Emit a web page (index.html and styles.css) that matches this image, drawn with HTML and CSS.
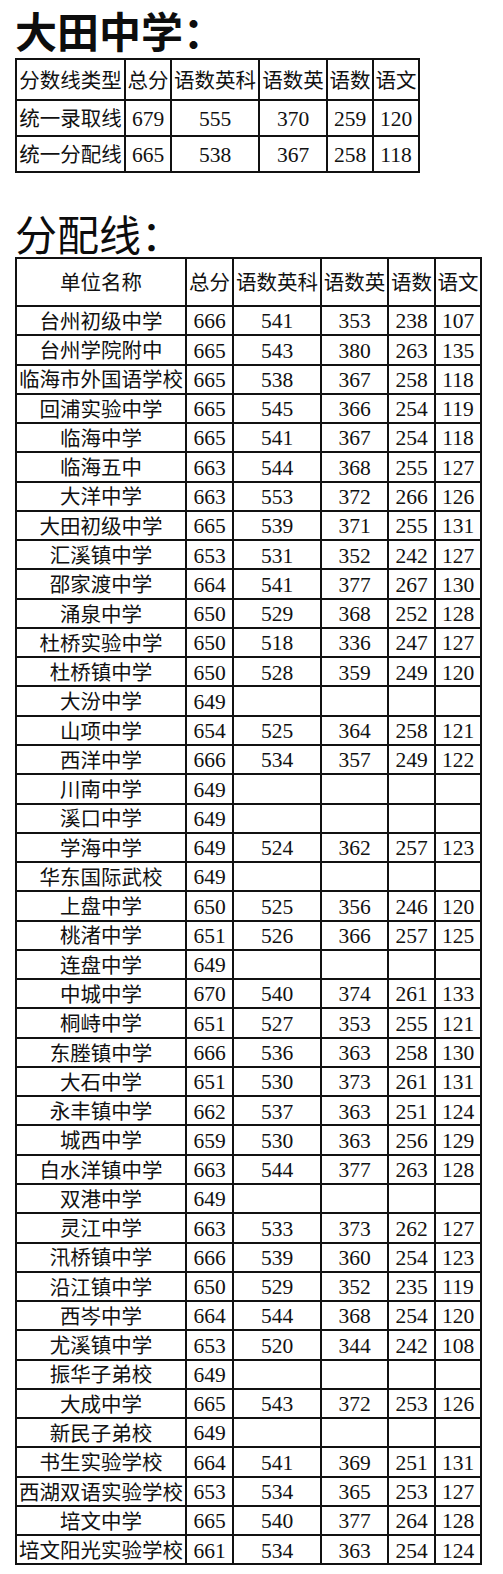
FILE: index.html
```html
<!DOCTYPE html>
<html lang="zh-CN">
<head>
<meta charset="utf-8">
<title>大田中学 分配线</title>
<link rel="stylesheet" href="styles.css">
</head>
<body>
<div class="page">
  <h1 class="title title-bold">大田中学：</h1>
  <div class="grid grid-top">
    <div class="c">分数线类型</div><div class="c">总分</div><div class="c">语数英科</div><div class="c">语数英</div><div class="c">语数</div><div class="c">语文</div>
    <div class="c">统一录取线</div><div class="c">679</div><div class="c">555</div><div class="c">370</div><div class="c">259</div><div class="c">120</div>
    <div class="c">统一分配线</div><div class="c">665</div><div class="c">538</div><div class="c">367</div><div class="c">258</div><div class="c">118</div>
  </div>
  <h2 class="title title-light">分配线：</h2>
  <div class="grid grid-main">
    <div class="c">单位名称</div><div class="c">总分</div><div class="c">语数英科</div><div class="c">语数英</div><div class="c">语数</div><div class="c">语文</div>
    <div class="c">台州初级中学</div><div class="c">666</div><div class="c">541</div><div class="c">353</div><div class="c">238</div><div class="c">107</div>
    <div class="c">台州学院附中</div><div class="c">665</div><div class="c">543</div><div class="c">380</div><div class="c">263</div><div class="c">135</div>
    <div class="c">临海市外国语学校</div><div class="c">665</div><div class="c">538</div><div class="c">367</div><div class="c">258</div><div class="c">118</div>
    <div class="c">回浦实验中学</div><div class="c">665</div><div class="c">545</div><div class="c">366</div><div class="c">254</div><div class="c">119</div>
    <div class="c">临海中学</div><div class="c">665</div><div class="c">541</div><div class="c">367</div><div class="c">254</div><div class="c">118</div>
    <div class="c">临海五中</div><div class="c">663</div><div class="c">544</div><div class="c">368</div><div class="c">255</div><div class="c">127</div>
    <div class="c">大洋中学</div><div class="c">663</div><div class="c">553</div><div class="c">372</div><div class="c">266</div><div class="c">126</div>
    <div class="c">大田初级中学</div><div class="c">665</div><div class="c">539</div><div class="c">371</div><div class="c">255</div><div class="c">131</div>
    <div class="c">汇溪镇中学</div><div class="c">653</div><div class="c">531</div><div class="c">352</div><div class="c">242</div><div class="c">127</div>
    <div class="c">邵家渡中学</div><div class="c">664</div><div class="c">541</div><div class="c">377</div><div class="c">267</div><div class="c">130</div>
    <div class="c">涌泉中学</div><div class="c">650</div><div class="c">529</div><div class="c">368</div><div class="c">252</div><div class="c">128</div>
    <div class="c">杜桥实验中学</div><div class="c">650</div><div class="c">518</div><div class="c">336</div><div class="c">247</div><div class="c">127</div>
    <div class="c">杜桥镇中学</div><div class="c">650</div><div class="c">528</div><div class="c">359</div><div class="c">249</div><div class="c">120</div>
    <div class="c">大汾中学</div><div class="c">649</div><div class="c"></div><div class="c"></div><div class="c"></div><div class="c"></div>
    <div class="c">山项中学</div><div class="c">654</div><div class="c">525</div><div class="c">364</div><div class="c">258</div><div class="c">121</div>
    <div class="c">西洋中学</div><div class="c">666</div><div class="c">534</div><div class="c">357</div><div class="c">249</div><div class="c">122</div>
    <div class="c">川南中学</div><div class="c">649</div><div class="c"></div><div class="c"></div><div class="c"></div><div class="c"></div>
    <div class="c">溪口中学</div><div class="c">649</div><div class="c"></div><div class="c"></div><div class="c"></div><div class="c"></div>
    <div class="c">学海中学</div><div class="c">649</div><div class="c">524</div><div class="c">362</div><div class="c">257</div><div class="c">123</div>
    <div class="c">华东国际武校</div><div class="c">649</div><div class="c"></div><div class="c"></div><div class="c"></div><div class="c"></div>
    <div class="c">上盘中学</div><div class="c">650</div><div class="c">525</div><div class="c">356</div><div class="c">246</div><div class="c">120</div>
    <div class="c">桃渚中学</div><div class="c">651</div><div class="c">526</div><div class="c">366</div><div class="c">257</div><div class="c">125</div>
    <div class="c">连盘中学</div><div class="c">649</div><div class="c"></div><div class="c"></div><div class="c"></div><div class="c"></div>
    <div class="c">中城中学</div><div class="c">670</div><div class="c">540</div><div class="c">374</div><div class="c">261</div><div class="c">133</div>
    <div class="c">桐峙中学</div><div class="c">651</div><div class="c">527</div><div class="c">353</div><div class="c">255</div><div class="c">121</div>
    <div class="c">东塍镇中学</div><div class="c">666</div><div class="c">536</div><div class="c">363</div><div class="c">258</div><div class="c">130</div>
    <div class="c">大石中学</div><div class="c">651</div><div class="c">530</div><div class="c">373</div><div class="c">261</div><div class="c">131</div>
    <div class="c">永丰镇中学</div><div class="c">662</div><div class="c">537</div><div class="c">363</div><div class="c">251</div><div class="c">124</div>
    <div class="c">城西中学</div><div class="c">659</div><div class="c">530</div><div class="c">363</div><div class="c">256</div><div class="c">129</div>
    <div class="c">白水洋镇中学</div><div class="c">663</div><div class="c">544</div><div class="c">377</div><div class="c">263</div><div class="c">128</div>
    <div class="c">双港中学</div><div class="c">649</div><div class="c"></div><div class="c"></div><div class="c"></div><div class="c"></div>
    <div class="c">灵江中学</div><div class="c">663</div><div class="c">533</div><div class="c">373</div><div class="c">262</div><div class="c">127</div>
    <div class="c">汛桥镇中学</div><div class="c">666</div><div class="c">539</div><div class="c">360</div><div class="c">254</div><div class="c">123</div>
    <div class="c">沿江镇中学</div><div class="c">650</div><div class="c">529</div><div class="c">352</div><div class="c">235</div><div class="c">119</div>
    <div class="c">西岑中学</div><div class="c">664</div><div class="c">544</div><div class="c">368</div><div class="c">254</div><div class="c">120</div>
    <div class="c">尤溪镇中学</div><div class="c">653</div><div class="c">520</div><div class="c">344</div><div class="c">242</div><div class="c">108</div>
    <div class="c">振华子弟校</div><div class="c">649</div><div class="c"></div><div class="c"></div><div class="c"></div><div class="c"></div>
    <div class="c">大成中学</div><div class="c">665</div><div class="c">543</div><div class="c">372</div><div class="c">253</div><div class="c">126</div>
    <div class="c">新民子弟校</div><div class="c">649</div><div class="c"></div><div class="c"></div><div class="c"></div><div class="c"></div>
    <div class="c">书生实验学校</div><div class="c">664</div><div class="c">541</div><div class="c">369</div><div class="c">251</div><div class="c">131</div>
    <div class="c">西湖双语实验学校</div><div class="c">653</div><div class="c">534</div><div class="c">365</div><div class="c">253</div><div class="c">127</div>
    <div class="c">培文中学</div><div class="c">665</div><div class="c">540</div><div class="c">377</div><div class="c">264</div><div class="c">128</div>
    <div class="c">培文阳光实验学校</div><div class="c">661</div><div class="c">534</div><div class="c">363</div><div class="c">254</div><div class="c">124</div>
  </div>
</div>
</body>
</html>
```
FILE: styles.css
```css
html, body {
  margin: 0;
  padding: 0;
  background: #ffffff;
}

.page {
  padding: 0 0 0 15px;
  color: #111111;
}

.title {
  margin: 0;
  font-family: "Noto Sans CJK SC", sans-serif;
  font-size: 42px;
  line-height: 42px;
  color: #0d0d0d;
}

.title-bold {
  font-weight: 700;
  padding-top: 9px;
  padding-bottom: 7px;
}

.title-light {
  font-weight: 400;
  padding-top: 39px;
  padding-bottom: 3px;
}

.grid {
  display: grid;
  width: max-content;
  border-left: 2px solid #111;
  border-top: 2px solid #111;
  font-family: "Liberation Serif", "Noto Sans CJK SC", serif;
  font-size: 20.5px;
  line-height: 1;
}

.grid-top {
  grid-template-columns: 109px 46px 88px 68px 46px 46px;
  grid-template-rows: 41px 36px 36px;
}

.grid-main {
  grid-template-columns: 170px 47px 88px 67px 47px 46px;
  grid-template-rows: 48px;
  grid-auto-rows: 29.27px;
}

.c {
  box-sizing: border-box;
  padding-top: 3px;
  border-right: 2px solid #111;
  border-bottom: 2px solid #111;
  display: flex;
  align-items: center;
  justify-content: center;
  white-space: nowrap;
  overflow: visible;
}

.grid .c:nth-child(n+7):not(:nth-child(6n+1)) {
  font-size: 21.5px;
}
```
